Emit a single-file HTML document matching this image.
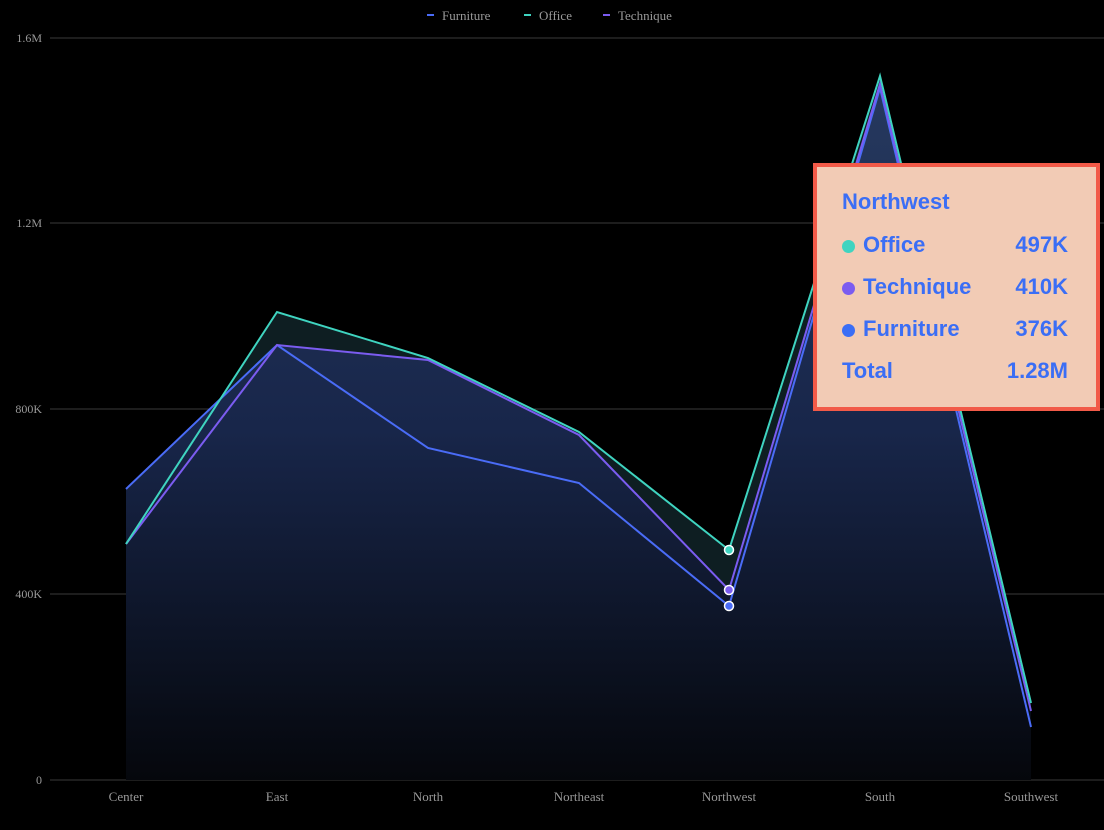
<!DOCTYPE html>
<html><head><style>
body{margin:0;background:#000;width:1104px;height:830px;overflow:hidden;position:relative;font-family:"Liberation Serif",serif}
svg{position:absolute;left:0;top:0}
.tt{position:absolute;left:813px;top:163px;width:279px;height:240px;background:#f2cbb5;border:4px solid #f25a48;font-family:"Liberation Sans",sans-serif;font-weight:bold;color:#3b6ef5;font-size:22px}
.row{position:absolute;left:25px;right:28px;display:flex;justify-content:space-between;align-items:center}
.d{display:inline-block;width:13px;height:13px;border-radius:50%;margin-right:8px;vertical-align:middle}
</style></head><body>
<svg width="1104" height="830">
<defs>
<linearGradient id="g" gradientUnits="userSpaceOnUse" x1="0" y1="80" x2="0" y2="780">
<stop offset="0" stop-color="#26395f"/>
<stop offset="0.5" stop-color="#18264a"/>
<stop offset="1" stop-color="#05070c"/>
</linearGradient>
</defs>
<g stroke="#3a3a3a" stroke-width="1">
<line x1="50" y1="38" x2="1104" y2="38"/><line x1="50" y1="223" x2="1104" y2="223"/>
<line x1="50" y1="409" x2="1104" y2="409"/><line x1="50" y1="594" x2="1104" y2="594"/>
<line x1="50" y1="780" x2="1104" y2="780"/>
</g>
<g fill="#999" font-size="12" text-anchor="end">
<text x="42" y="42">1.6M</text><text x="42" y="227">1.2M</text><text x="42" y="413">800K</text><text x="42" y="598">400K</text><text x="42" y="784">0</text>
</g>
<g fill="#999" font-size="13" text-anchor="middle">
<text x="126" y="801">Center</text><text x="277" y="801">East</text><text x="428" y="801">North</text><text x="579" y="801">Northeast</text><text x="729" y="801">Northwest</text><text x="880" y="801">South</text><text x="1031" y="801">Southwest</text>
</g>
<path d="M126,544 L277,312 L428,358 L579,432 L729,550 L880,76 L1031,703 L1031,780 L126,780Z" fill="#0e1e22"/>
<path d="M126,489 L200,420 L277,345 L428,360 L579,435 L729,590 L880,84 L1031,711 L1031,780 L126,780Z" fill="url(#g)"/>
<g fill="none" stroke-width="2">
<polyline stroke="#4a6cf7" points="126,489 277,345 428,448 579,483 729,606 880,88 1031,727"/>
<polyline stroke="#7b5cf0" points="126,544 277,345 428,360 579,435 729,590 880,84 1031,711"/>
<polyline stroke="#3fd4c0" points="126,544 277,312 428,358 579,432 729,550 880,76 1031,703"/>
</g>
<circle cx="729" cy="550" r="4.5" fill="#3fd4c0" stroke="#fff" stroke-width="1.5"/>
<circle cx="729" cy="590" r="4.5" fill="#7b5cf0" stroke="#fff" stroke-width="1.5"/>
<circle cx="729" cy="606" r="4.5" fill="#4a6cf7" stroke="#fff" stroke-width="1.5"/>
<g font-size="13" fill="#999">
<rect x="427" y="14" width="7" height="2" fill="#4a6cf7"/><text x="442" y="20">Furniture</text>
<rect x="524" y="14" width="7" height="2" fill="#3fd4c0"/><text x="539" y="20">Office</text>
<rect x="603" y="14" width="7" height="2" fill="#7b5cf0"/><text x="618" y="20">Technique</text>
</g>
</svg>
<div class="tt">
<div class="row" style="top:22px"><span>Northwest</span></div>
<div class="row" style="top:65px"><span><span class="d" style="background:#3fd4c0"></span>Office</span><span>497K</span></div>
<div class="row" style="top:107px"><span><span class="d" style="background:#7b5cf0"></span>Technique</span><span>410K</span></div>
<div class="row" style="top:149px"><span><span class="d" style="background:#3b6ef5"></span>Furniture</span><span>376K</span></div>
<div class="row" style="top:191px"><span>Total</span><span>1.28M</span></div>
</div>
</body></html>
